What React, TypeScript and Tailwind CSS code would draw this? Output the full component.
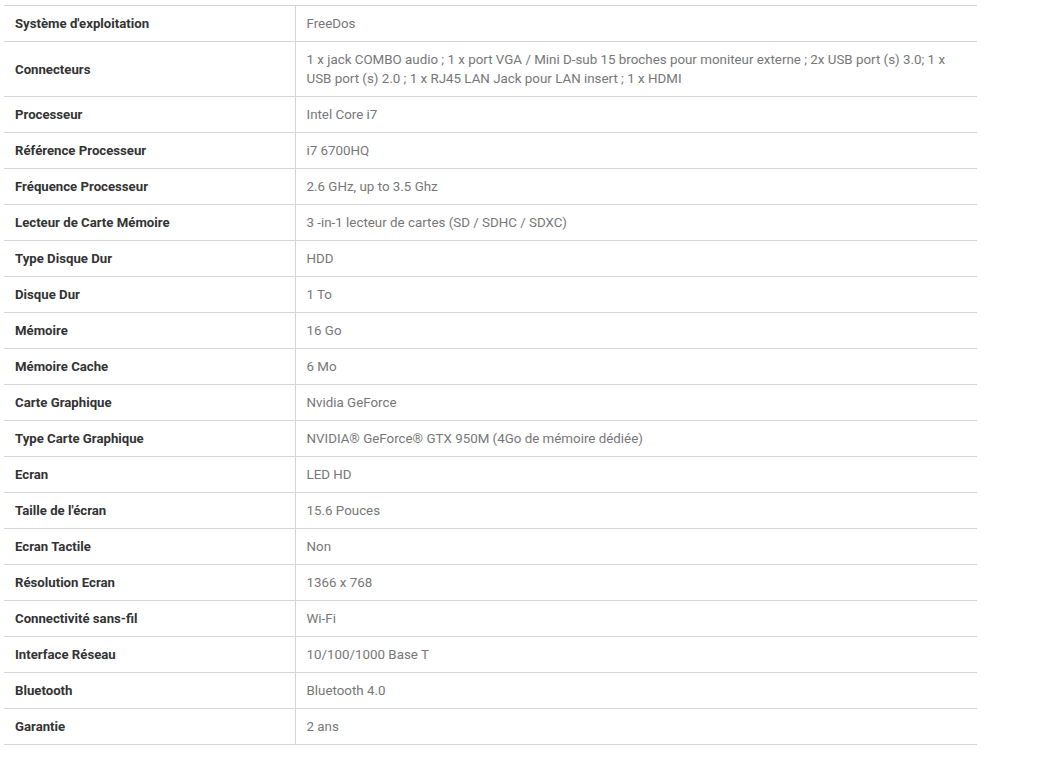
const rows: [string, string][] = [
  ["Système d'exploitation", 'FreeDos'],
  [
    'Connecteurs',
    '1 x jack COMBO audio ; 1 x port VGA / Mini D-sub 15 broches pour moniteur externe ; 2x USB port (s) 3.0; 1 x USB port (s) 2.0 ; 1 x RJ45 LAN Jack pour LAN insert ; 1 x HDMI',
  ],
  ['Processeur', 'Intel Core i7'],
  ['Référence Processeur', 'i7 6700HQ'],
  ['Fréquence Processeur', '2.6 GHz, up to 3.5 Ghz'],
  ['Lecteur de Carte Mémoire', '3 -in-1 lecteur de cartes (SD / SDHC / SDXC)'],
  ['Type Disque Dur', 'HDD'],
  ['Disque Dur', '1 To'],
  ['Mémoire', '16 Go'],
  ['Mémoire Cache', '6 Mo'],
  ['Carte Graphique', 'Nvidia GeForce'],
  ['Type Carte Graphique', 'NVIDIA® GeForce® GTX 950M (4Go de mémoire dédiée)'],
  ['Ecran', 'LED HD'],
  ["Taille de l'écran", '15.6 Pouces'],
  ['Ecran Tactile', 'Non'],
  ['Résolution Ecran', '1366 x 768'],
  ['Connectivité sans-fil', 'Wi-Fi'],
  ['Interface Réseau', '10/100/1000 Base T'],
  ['Bluetooth', 'Bluetooth 4.0'],
  ['Garantie', '2 ans'],
];

export default function App() {
  return (
    <div className="min-h-screen bg-white pl-[4px] pt-[5px] font-['Roboto',sans-serif] text-[13px]">
      <table className="w-[973px] border-collapse">
        <tbody>
          {rows.map(([label, value]) => (
            <tr key={label} className="border-t border-b border-[#d5d5d5]">
              <td className="w-[291px] border-r border-[#d5d5d5] py-[8px] pl-[11px] pr-3 align-middle text-[13.2px] font-bold leading-[19px] text-[#333]">
                {label}
              </td>
              <td className="py-[8px] pl-[11px] pr-[26px] align-middle text-[13.35px] leading-[19px] text-[#777]">
                {value}
              </td>
            </tr>
          ))}
        </tbody>
      </table>
    </div>
  );
}
